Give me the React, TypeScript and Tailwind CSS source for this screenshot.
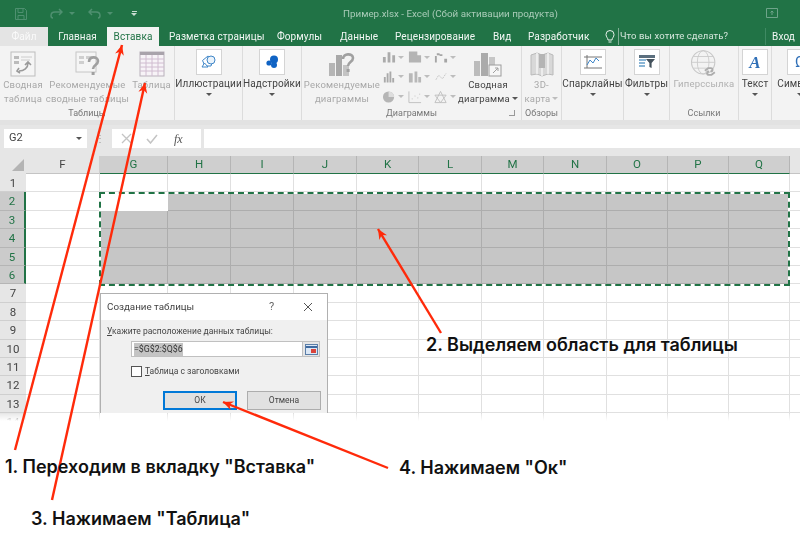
import React from 'react';

const columns = [
  { name: 'F', w: 74 },
  { name: 'G', w: 68 },
  { name: 'H', w: 63 },
  { name: 'I', w: 63 },
  { name: 'J', w: 63 },
  { name: 'K', w: 62 },
  { name: 'L', w: 63 },
  { name: 'M', w: 62 },
  { name: 'N', w: 63 },
  { name: 'O', w: 61 },
  { name: 'P', w: 61 },
  { name: 'Q', w: 61 },
  { name: '', w: 11 },
];
const rows = [1, 2, 3, 4, 5, 6, 7, 8, 9, 10, 11, 12, 13, 14];

const Caret = ({ className = 'border-t-[#555]' }: { className?: string }) => (
  <span className={`inline-block w-0 h-0 border-x-[3px] border-x-transparent border-t-[3px] ${className}`} />
);

const BoxIcon = ({ children }: { children: React.ReactNode }) => (
  <div className="w-[26px] h-[26px] bg-white border border-[#d4d4d4] flex items-center justify-center">{children}</div>
);

const Drop = ({ label, w, icon }: { label: string; w: number; icon: React.ReactNode }) => (
  <div className="flex flex-col items-center pt-[3px] shrink-0" style={{ width: w }}>
    <BoxIcon>{icon}</BoxIcon>
    <span className="mt-[2px] text-[10px] tracking-[0.1px] leading-[14px] text-[#444] whitespace-nowrap">{label}</span>
    <span className="mt-[2px] leading-[4px] flex"><Caret /></span>
  </div>
);

const Disabled = ({ lines, w, icon }: { lines: React.ReactNode[]; w: number; icon: React.ReactNode }) => (
  <div className="flex flex-col items-center pt-[5px] shrink-0" style={{ width: w }}>
    <div className="h-[26px] flex items-center justify-center">{icon}</div>
    <div className="mt-[1px] text-[9.5px] tracking-[0.2px] leading-[13.5px] text-[#a8a8a8] text-center whitespace-nowrap">
      {lines.map((l, i) => (
        <div key={i} className="flex items-center justify-center gap-[2px]">{l}</div>
      ))}
    </div>
  </div>
);

const Group = ({ w, label, children, launcher }: { w: number; label: string; children: React.ReactNode; launcher?: boolean }) => (
  <div className="flex flex-col shrink-0 border-r border-[#dcdcdc]" style={{ width: w }}>
    <div className="flex h-[58px]">{children}</div>
    <div className="mt-auto flex items-center justify-center relative text-[9px] leading-[14px] text-[#777]">
      {label}
      {launcher && <span className="absolute right-[6px] top-[4px] w-[6px] h-[6px] border-r border-b border-[#999]" />}
    </div>
  </div>
);

const PivotIcon = () => (
  <svg width="26" height="26" viewBox="0 0 26 26" fill="none">
    <rect x="1" y="1" width="24" height="24" fill="#f5f5f5" stroke="#bdbdbd" />
    <path d="M4 5h5v3H4zM4 10h5v3H4z" fill="#bbb" />
    <path d="M11 6h11M11 9h9" stroke="#ccc" />
    <path d="M9 20c5 0 9-3 9-8M15 14l3-3 3 3M9 17l-2 3 3 2" stroke="#9a9a9a" strokeWidth="1.6" />
  </svg>
);

const RecPivotIcon = () => (
  <svg width="26" height="26" viewBox="0 0 26 26" fill="none">
    <rect x="1" y="1" width="20" height="20" fill="#f5f5f5" stroke="#c6c6c6" />
    <path d="M4 5h5v3H4zM4 10h5v3H4zM11 5h7v3h-7z" fill="#cfcfcf" />
    <path d="M14 11c0-6 9-6 9-1 0 4-5 4-5 8" stroke="#a0a0a0" strokeWidth="2.6" />
    <rect x="16.6" y="21" width="3" height="3" fill="#a0a0a0" />
  </svg>
);

const TableIcon = () => (
  <svg width="26" height="26" viewBox="0 0 26 26" fill="none">
    <rect x="1" y="1" width="24" height="24" fill="#f7f3f7" stroke="#b9b1bb" />
    <rect x="1" y="1" width="24" height="3" fill="#a9a3ab" />
    <path d="M1 8h24M1 12h24M1 16h24M1 20h24M7 4v21M13 4v21M19 4v21" stroke="#d0bcd0" />
  </svg>
);

const ShapesIcon = () => (
  <svg width="16" height="16" viewBox="0 0 16 16" fill="none" stroke="#3f86c8">
    <path d="M1.5 6.5 7 2l5 4-2 6H4z" />
    <circle cx="10" cy="6" r="4" fill="#eaf3fb" />
    <path d="M3.5 9 7 13h-6z" fill="#fff" />
  </svg>
);

const AddinIcon = () => (
  <svg width="16" height="16" viewBox="0 0 16 16">
    <circle cx="10" cy="5.5" r="4" fill="#0f63c4" />
    <circle cx="5" cy="9" r="2.6" fill="#0f63c4" />
    <circle cx="10" cy="11" r="3" fill="#0f63c4" />
  </svg>
);

const RecChartIcon = () => (
  <svg width="28" height="26" viewBox="0 0 28 26" fill="none">
    <rect x="1" y="12" width="6" height="13" fill="#b5b5b5" />
    <rect x="8" y="4" width="6" height="21" fill="#a8a8a8" />
    <rect x="15" y="14" width="6" height="11" fill="#c4c4c4" />
    <path d="M15 8c0-6 10-6 10-1 0 4-5 4-5 8" stroke="#a0a0a0" strokeWidth="2.6" />
    <rect x="18.6" y="18" width="3" height="3" fill="#a0a0a0" />
  </svg>
);

const MiniChart = ({ kind }: { kind: number }) => (
  <span className="flex items-center gap-[2px] w-[22px]">
    <svg width="15" height="14" viewBox="0 0 15 14">
      {kind === 0 && <path d="M1 13V7h3v6zM6 13V2h3v11zM11 13V5h3v8z" fill="#ababab" />}
      {kind === 1 && <path d="M1 13V1h9v4h4v8z" fill="#b4b4b4" />}
      {kind === 2 && <path d="M1 13V6h2v7zM6 4h3v2H6zM11 9h3v4h-3zM3 3h3v2H3z" fill="#a5a5a5" />}
      {kind === 3 && <path d="M2 10l3-5 4 4 4-6" stroke="#c4c4c4" fill="none" strokeDasharray="2 1" />}
      {kind === 4 && <path d="M2 13V7h2v6zM5 13V3h2v10zM8 13V1h2v12zM11 13V8h2v5z" fill="#a9a9a9" />}
      {kind === 5 && <path d="M1 13V3h4v10zM7 13V1h3v12zM11 13V7h3v6z" fill="#b8b8b8" />}
      {kind === 6 && (
        <g><circle cx="7" cy="7" r="6" fill="#b5b5b5" /><path d="M7 7V1a6 6 0 0 1 6 6z" fill="#dedede" /></g>
      )}
      {kind === 7 && <path d="M1 1v12h13M4 9h1M7 6h1M10 8h1M12 4h1" stroke="#c0c0c0" fill="none" />}
      {kind === 8 && <path d="M7 1l6 12H1zM1 5h12L7 13z" stroke="#c0c0c0" fill="none" />}
    </svg>
    <Caret className="border-t-[#bdbdbd]" />
  </span>
);

const PivotChartIcon = () => (
  <svg width="30" height="26" viewBox="0 0 30 26" fill="none">
    <rect x="1" y="10" width="6" height="15" fill="#bbb" />
    <rect x="8" y="2" width="7" height="23" fill="#aaa" />
    <rect x="16" y="6" width="6" height="8" fill="#c6c6c6" />
    <rect x="16" y="14" width="12" height="11" fill="#f6f6f6" stroke="#9c9c9c" />
    <path d="M20 22l5-5M22 17h3v3" stroke="#a0a0a0" />
  </svg>
);

const MapIcon = () => (
  <svg width="24" height="26" viewBox="0 0 24 26" fill="none">
    <path d="M1 4l6-2 5 2 6-2 5 2v20l-5-1-6 2-5-2-6 1z" fill="#d8d8d8" stroke="#bababa" />
    <path d="M7 2v21M12 4v21M18 2v21" stroke="#f3f3f3" strokeWidth="1.5" />
    <path d="M9 3h6v14H9z" fill="#b4b4b4" />
  </svg>
);

const SparkIcon = () => (
  <svg width="18" height="16" viewBox="0 0 18 16" fill="none">
    <path d="M3 1v13M0 14h18M0 3h18" stroke="#777" />
    <path d="M3 11l3-5 3 3 3-5 3 3" stroke="#3f86c8" />
  </svg>
);

const FilterIcon = () => (
  <svg width="16" height="14" viewBox="0 0 16 14">
    <rect x="0" y="0" width="16" height="3" fill="#5b6f7e" />
    <path d="M0 4h7v2H0zM0 7h6v2H0zM0 10h6v2H0z" fill="#8bb6d6" />
    <path d="M7 4h9l-3.4 4v5l-2.2-1V8z" fill="#44525c" />
  </svg>
);

const LinkIcon = () => (
  <svg width="30" height="30" viewBox="0 0 36 36" fill="none" stroke="#c8c8c8">
    <circle cx="17" cy="16" r="14" strokeWidth="1.3" />
    <ellipse cx="17" cy="16" rx="7" ry="14" />
    <path d="M3 16h28M5 9h24M5 23h24" />
    <path d="M19 26l4-3h3c3 0 3 4 0 4M31 28l-4 3h-3c-3 0-3-4 0-4" stroke="#adadad" strokeWidth="2.2" />
  </svg>
);

const TextIcon = () => (
  <span className="text-[17px] leading-none italic font-semibold text-[#2f6fb7]" style={{ fontFamily: '"Liberation Serif", serif' }}>
    A
  </span>
);

const Ribbon = () => (
  <div className="flex h-[74px] bg-[#f3f3f3]">
    <Group w={175} label="Таблицы">
      <Disabled w={46} lines={['Сводная', 'таблица']} icon={<PivotIcon />} />
      <Disabled w={83} lines={['Рекомендуемые', 'сводные таблицы']} icon={<RecPivotIcon />} />
      <Disabled w={45} lines={['Таблица']} icon={<TableIcon />} />
    </Group>
    <Group w={68} label="">
      <Drop w={67} label="Иллюстрации" icon={<ShapesIcon />} />
    </Group>
    <Group w={59} label="">
      <Drop w={58} label="Надстройки" icon={<AddinIcon />} />
    </Group>
    <Group w={220} label="Диаграммы" launcher>
      <Disabled w={80} lines={['Рекомендуемые', 'диаграммы']} icon={<RecChartIcon />} />
      <div className="grid grid-cols-3 gap-x-[3px] gap-y-[5px] pt-[4px] w-[75px] h-[58px] shrink-0">
        {[0, 1, 2, 4, 5, 3, 6, 7, 8].map((k) => (
          <MiniChart key={k} kind={k} />
        ))}
      </div>
      <div className="flex flex-col items-center pt-[5px] w-[62px] shrink-0">
        <div className="h-[26px]"><PivotChartIcon /></div>
        <div className="mt-[1px] text-[9.5px] tracking-[0.2px] leading-[13.5px] text-[#444] text-center whitespace-nowrap">
          <div>Сводная</div>
          <div className="flex items-center gap-[2px]">диаграмма <Caret /></div>
        </div>
      </div>
    </Group>
    <Group w={40} label="Обзоры">
      <Disabled w={39} lines={['3D-', <>карта <Caret className="border-t-[#bdbdbd]" /></>]} icon={<MapIcon />} />
    </Group>
    <Group w={62} label="">
      <Drop w={61} label="Спарклайны" icon={<SparkIcon />} />
    </Group>
    <Group w={46} label="">
      <Drop w={45} label="Фильтры" icon={<FilterIcon />} />
    </Group>
    <Group w={69} label="Ссылки">
      <div className="flex flex-col items-center w-[68px] shrink-0 pt-[3px]">
        <LinkIcon />
        <span className="mt-[-2px] text-[9.5px] tracking-[0.2px] leading-[14px] text-[#b0b0b0]">Гиперссылка</span>
      </div>
    </Group>
    <Group w={33} label="">
      <Drop w={32} label="Текст" icon={<TextIcon />} />
    </Group>
    <div className="flex-1 min-w-0 overflow-hidden">
      <Drop w={56} label="Символы" icon={<span className="text-[15px] leading-none text-[#2f6fb7]">Ω</span>} />
    </div>
  </div>
);

const Tabs = () => (
  <div className="flex h-[19px] items-stretch bg-[#217346] text-[10px] tracking-[0.1px] text-[#f2f7f4] whitespace-nowrap">
    <div className="w-[48px] bg-[#e4e4e4] text-white/80 flex items-center justify-center">Файл</div>
    <div className="w-[59px] flex items-center justify-center">Главная</div>
    <div className="w-[52px] bg-[#f3f3f3] text-[#217346] flex items-center justify-center">Вставка</div>
    <div className="w-[118px] pl-[10px] flex items-center">Разметка страницы</div>
    <div className="w-[63px] flex items-center">Формулы</div>
    <div className="w-[55px] flex items-center">Данные</div>
    <div className="w-[98px] flex items-center">Рецензирование</div>
    <div className="w-[35px] flex items-center">Вид</div>
    <div className="w-[77px] flex items-center">Разработчик</div>
    <div className="w-[13px] flex items-center">
      <svg width="10" height="14" viewBox="0 0 10 14" fill="none" stroke="#e8f1ec">
        <path d="M3 10c0-2-2-3-2-5.500a4 4 0 0 1 8 0C9 7 7 8 7 10zM3.500 12h3" />
      </svg>
    </div>
    <div className="pl-[1px] border-l border-[#7fae95] my-[1px] flex items-center text-[9.500px] text-[#d5e6dc]">Что вы хотите сделать?</div>
    <div className="ml-auto mr-[5px] pl-[6px] border-l border-[#3f8a63] my-[1px] flex items-center">Вход</div>
  </div>
);

const TitleBar = () => (
  <div className="relative flex items-center h-[27px] bg-[#217346] pl-[15px]">
    <svg width="12" height="12" viewBox="0 0 12 12" fill="none" stroke="#4f9070">
      <path d="M.5.5h9l2 2v9H.5zM3 .5v4h5v-4M3 11.500v-4h6v4" />
    </svg>
    <svg className="ml-[23px]" width="13" height="11" viewBox="0 0 13 11" fill="none" stroke="#4f9070" strokeWidth="1.500">
      <path d="M12 4H5C2 4 1 6 1 7.500S2 10 3 10M9 1l3 3-3 3" />
    </svg>
    <span className="ml-[6px] flex"><Caret className="border-t-[#4f9070]" /></span>
    <svg className="ml-[13px]" width="13" height="11" viewBox="0 0 13 11" fill="none" stroke="#4f9070" strokeWidth="1.500">
      <path d="M1 4h7c3 0 4 2 4 3.500S11 10 10 10M4 1 1 4l3 3" />
    </svg>
    <span className="ml-[6px] flex"><Caret className="border-t-[#4f9070]" /></span>
    <span className="ml-[18px] flex flex-col items-center gap-[1px]">
      <span className="w-[5px] h-px bg-[#c9ddd2]" />
      <Caret className="border-t-[#c9ddd2]" />
    </span>
    <div className="absolute left-[343px] top-[6px] text-[9.800px] leading-[15px] text-[#a9cbb8] whitespace-nowrap">
      Пример.xlsx - Excel (Сбой активации продукта)
    </div>
    <svg className="absolute left-[766px] top-[8px]" width="12" height="10" viewBox="0 0 12 10" fill="none" stroke="#6ea48a">
      <path d="M.5.5h11v9H.5zM6 7V3M4.500 4.500 6 3l1.500 1.500" />
    </svg>
  </div>
);

const FormulaBar = () => (
  <div className="flex items-start h-[36px] pt-[4px] bg-[#e6e6e6] border-t-[5px] border-[#e2e2e2]">
    <div className="ml-[4px] w-[83px] h-[19px] bg-white flex items-center justify-between px-[5px] text-[11px] text-[#444]">
      G2
      <Caret />
    </div>
    <div className="w-[25px] h-[19px] flex items-center justify-center text-[10px] text-[#999]">⋮</div>
    <div className="w-[89px] h-[19px] bg-white flex items-center text-[#b8b8b8] pl-[9px] gap-[14px]">
      <svg width="11" height="11" viewBox="0 0 11 11" stroke="#c4c4c4" strokeWidth="1.300"><path d="M1 1l9 9M10 1l-9 9" /></svg>
      <svg width="12" height="10" viewBox="0 0 12 10" fill="none" stroke="#c4c4c4" strokeWidth="1.500"><path d="M1 5l3.500 4L11 1" /></svg>
      <span className="italic text-[12px] text-[#555] ml-[2px]" style={{ fontFamily: '"Liberation Serif", serif' }}>fx</span>
    </div>
    <div className="ml-[3px] flex-1 h-[19px] bg-white" />
  </div>
);

const Sheet = () => (
  <div className="relative h-[265px] overflow-hidden bg-[#e6e6e6]">
    {/* column headers */}
    <div className="flex h-[18px]">
      <div className="w-[26px] shrink-0 bg-[#e6e6e6] flex items-end justify-end pr-[2px] pb-[3px]">
        <span className="w-0 h-0 border-l-[12px] border-l-transparent border-b-[12px] border-b-[#b4b4b4]" />
      </div>
      {columns.map((c, i) => {
        const active = i >= 1 && i <= 11;
        return (
          <div
            key={i}
            style={{ width: c.w }}
            className={`shrink-0 flex items-center justify-center text-[11.500px] border-r border-b ${
              active
                ? 'bg-[#cfcfcf] text-[#217346] border-r-[#b5b5b5] border-b-[#217346]'
                : 'bg-[#e6e6e6] text-[#444] border-r-[#cfcfcf] border-b-[#c4c4c4]'
            }`}
          >
            {c.name}
          </div>
        );
      })}
    </div>
    {/* rows */}
    {rows.map((r) => {
      const selected = r >= 2 && r <= 6;
      return (
        <div key={r} className="flex h-[18.400px]">
          <div
            className={`w-[26px] shrink-0 flex items-center justify-center pt-[2px] text-[11.500px] border-b ${
              selected
                ? 'bg-[#cbcbcb] text-[#217346] border-[#b5b5b5] border-r-2 border-r-[#217346]'
                : 'bg-[#e6e6e6] text-[#444] border-[#cfcfcf]'
            }`}
          >
            {r}
          </div>
          {columns.map((c, i) => {
            const inRange = selected && i >= 1 && i <= 11;
            const active = r === 2 && i === 1;
            return (
              <div
                key={i}
                style={{ width: c.w }}
                className={`shrink-0 border-r border-b ${
                  active
                    ? 'bg-white border-white'
                    : inRange
                      ? 'bg-[#c6c6c6] border-[#adadad]'
                      : 'bg-white border-[#e0e0e0]'
                }`}
              />
            );
          })}
        </div>
      );
    })}
    {/* marching ants around the selection */}
    <div className="absolute left-[99px] top-[36px] w-[691px] h-[94px] border-2 border-white">
      <div className="-m-[2px] h-[94px] border-2 border-dashed border-[#217346]" />
    </div>
    {/* bottom fade into the white page */}
    <div className="absolute left-0 right-0 bottom-0 h-[7px] bg-gradient-to-b from-white/20 to-white" />
  </div>
);

const Dialog = () => (
  <div className="absolute left-[100px] top-[293px] w-[228px] h-[120px] bg-[#f0f0f0] border-x border-t border-[#b0b0b0] text-[#444]">
    <div className="h-[26px] bg-white flex items-center pl-[6px] text-[9.800px] whitespace-nowrap">
      <span className="w-[162px]">Создание таблицы</span>
      <span className="text-[#666] text-[11px]">?</span>
      <svg className="ml-[29px]" width="10" height="10" viewBox="0 0 10 10" stroke="#555"><path d="M1 1l8 8M9 1 1 9" /></svg>
    </div>
    <div className="pl-[6px] pt-[5px] text-[8.500px] leading-[13px] whitespace-nowrap">
      <span className="underline underline-offset-1">У</span>кажите расположение данных таблицы:
    </div>
    <div className="ml-[30px] mt-[3px] w-[189px] h-[16px] flex border border-[#c0c0c0] bg-white">
      <div className="flex-1 flex items-center pl-[2px] text-[8.800px]">
        <span className="bg-[#c4c4c4] text-[#333] leading-[13px]">=$G$2:$Q$6</span>
      </div>
      <div className="w-[17px] bg-[#e6e6e6] border-l border-[#c0c0c0] flex items-center justify-center">
        <svg width="13" height="11" viewBox="0 0 13 11">
          <rect x=".5" y=".5" width="12" height="10" fill="#dbe7f5" stroke="#5b7ea8" />
          <path d="M1 3h11" stroke="#3f6aa0" strokeWidth="2" />
          <rect x="6" y="5" width="5" height="4" fill="#d9433a" />
        </svg>
      </div>
    </div>
    <div className="ml-[30px] mt-[8px] flex items-center gap-[3px] text-[8.500px] leading-[12px] whitespace-nowrap">
      <span className="w-[11px] h-[11px] bg-white border border-[#555]" />
      <span><span className="underline underline-offset-1">Т</span>аблица с заголовками</span>
    </div>
    <div className="ml-[62px] mt-[14px] flex gap-[10px] text-[8.500px]">
      <div className="w-[74px] h-[19px] bg-[#e1e1e1] border-2 border-[#0078d7] flex items-center justify-center">ОК</div>
      <div className="w-[74px] h-[19px] bg-[#e1e1e1] border border-[#adadad] flex items-center justify-center">Отмена</div>
    </div>
  </div>
);

const Arrow = ({ x1, y1, x2, y2 }: { x1: number; y1: number; x2: number; y2: number }) => {
  const a = Math.atan2(y2 - y1, x2 - x1);
  const head = 11;
  const pt = (d: number) => `${x2 - head * Math.cos(a + d)},${y2 - head * Math.sin(a + d)}`;
  return (
    <g>
      <line x1={x1} y1={y1} x2={x2} y2={y2} stroke="#ff2a0a" strokeWidth="2.400" />
      <polygon points={`${x2},${y2} ${pt(0.42)} ${x2 - 7 * Math.cos(a)},${y2 - 7 * Math.sin(a)} ${pt(-0.42)}`} fill="#ff2a0a" />
    </g>
  );
};

const Note = ({ className, children }: { className: string; children: React.ReactNode }) => (
  <div
    className={`absolute text-[18px] leading-[24px] font-semibold text-[#111] whitespace-nowrap ${className}`}
    style={{ fontFamily: 'Inter, sans-serif' }}
  >
    {children}
  </div>
);

export default function App() {
  return (
    <div className="relative w-[800px] h-[541px] overflow-hidden bg-white" style={{ fontFamily: 'Roboto, sans-serif' }}>
      <div className="blur-[0.3px]">
        <TitleBar />
        <Tabs />
        <Ribbon />
        <FormulaBar />
        <Sheet />
        <Dialog />
      </div>

      <svg className="absolute inset-0" width="800" height="541">
        <Arrow x1={15} y1={450} x2={122} y2={45} />
        <Arrow x1={52} y1={500} x2={145} y2={83} />
        <Arrow x1={441} y1={333} x2={378} y2={229} />
        <Arrow x1={388} y1={468} x2={223} y2={402} />
      </svg>

      <Note className="left-[5px] top-[455px]">1. Переходим в вкладку "Вставка"</Note>
      <Note className="left-[426px] top-[333px]">2. Выделяем область для таблицы</Note>
      <Note className="left-[31px] top-[507px]">3. Нажимаем "Таблица"</Note>
      <Note className="left-[399px] top-[456px]">4. Нажимаем "Ок"</Note>
    </div>
  );
}
